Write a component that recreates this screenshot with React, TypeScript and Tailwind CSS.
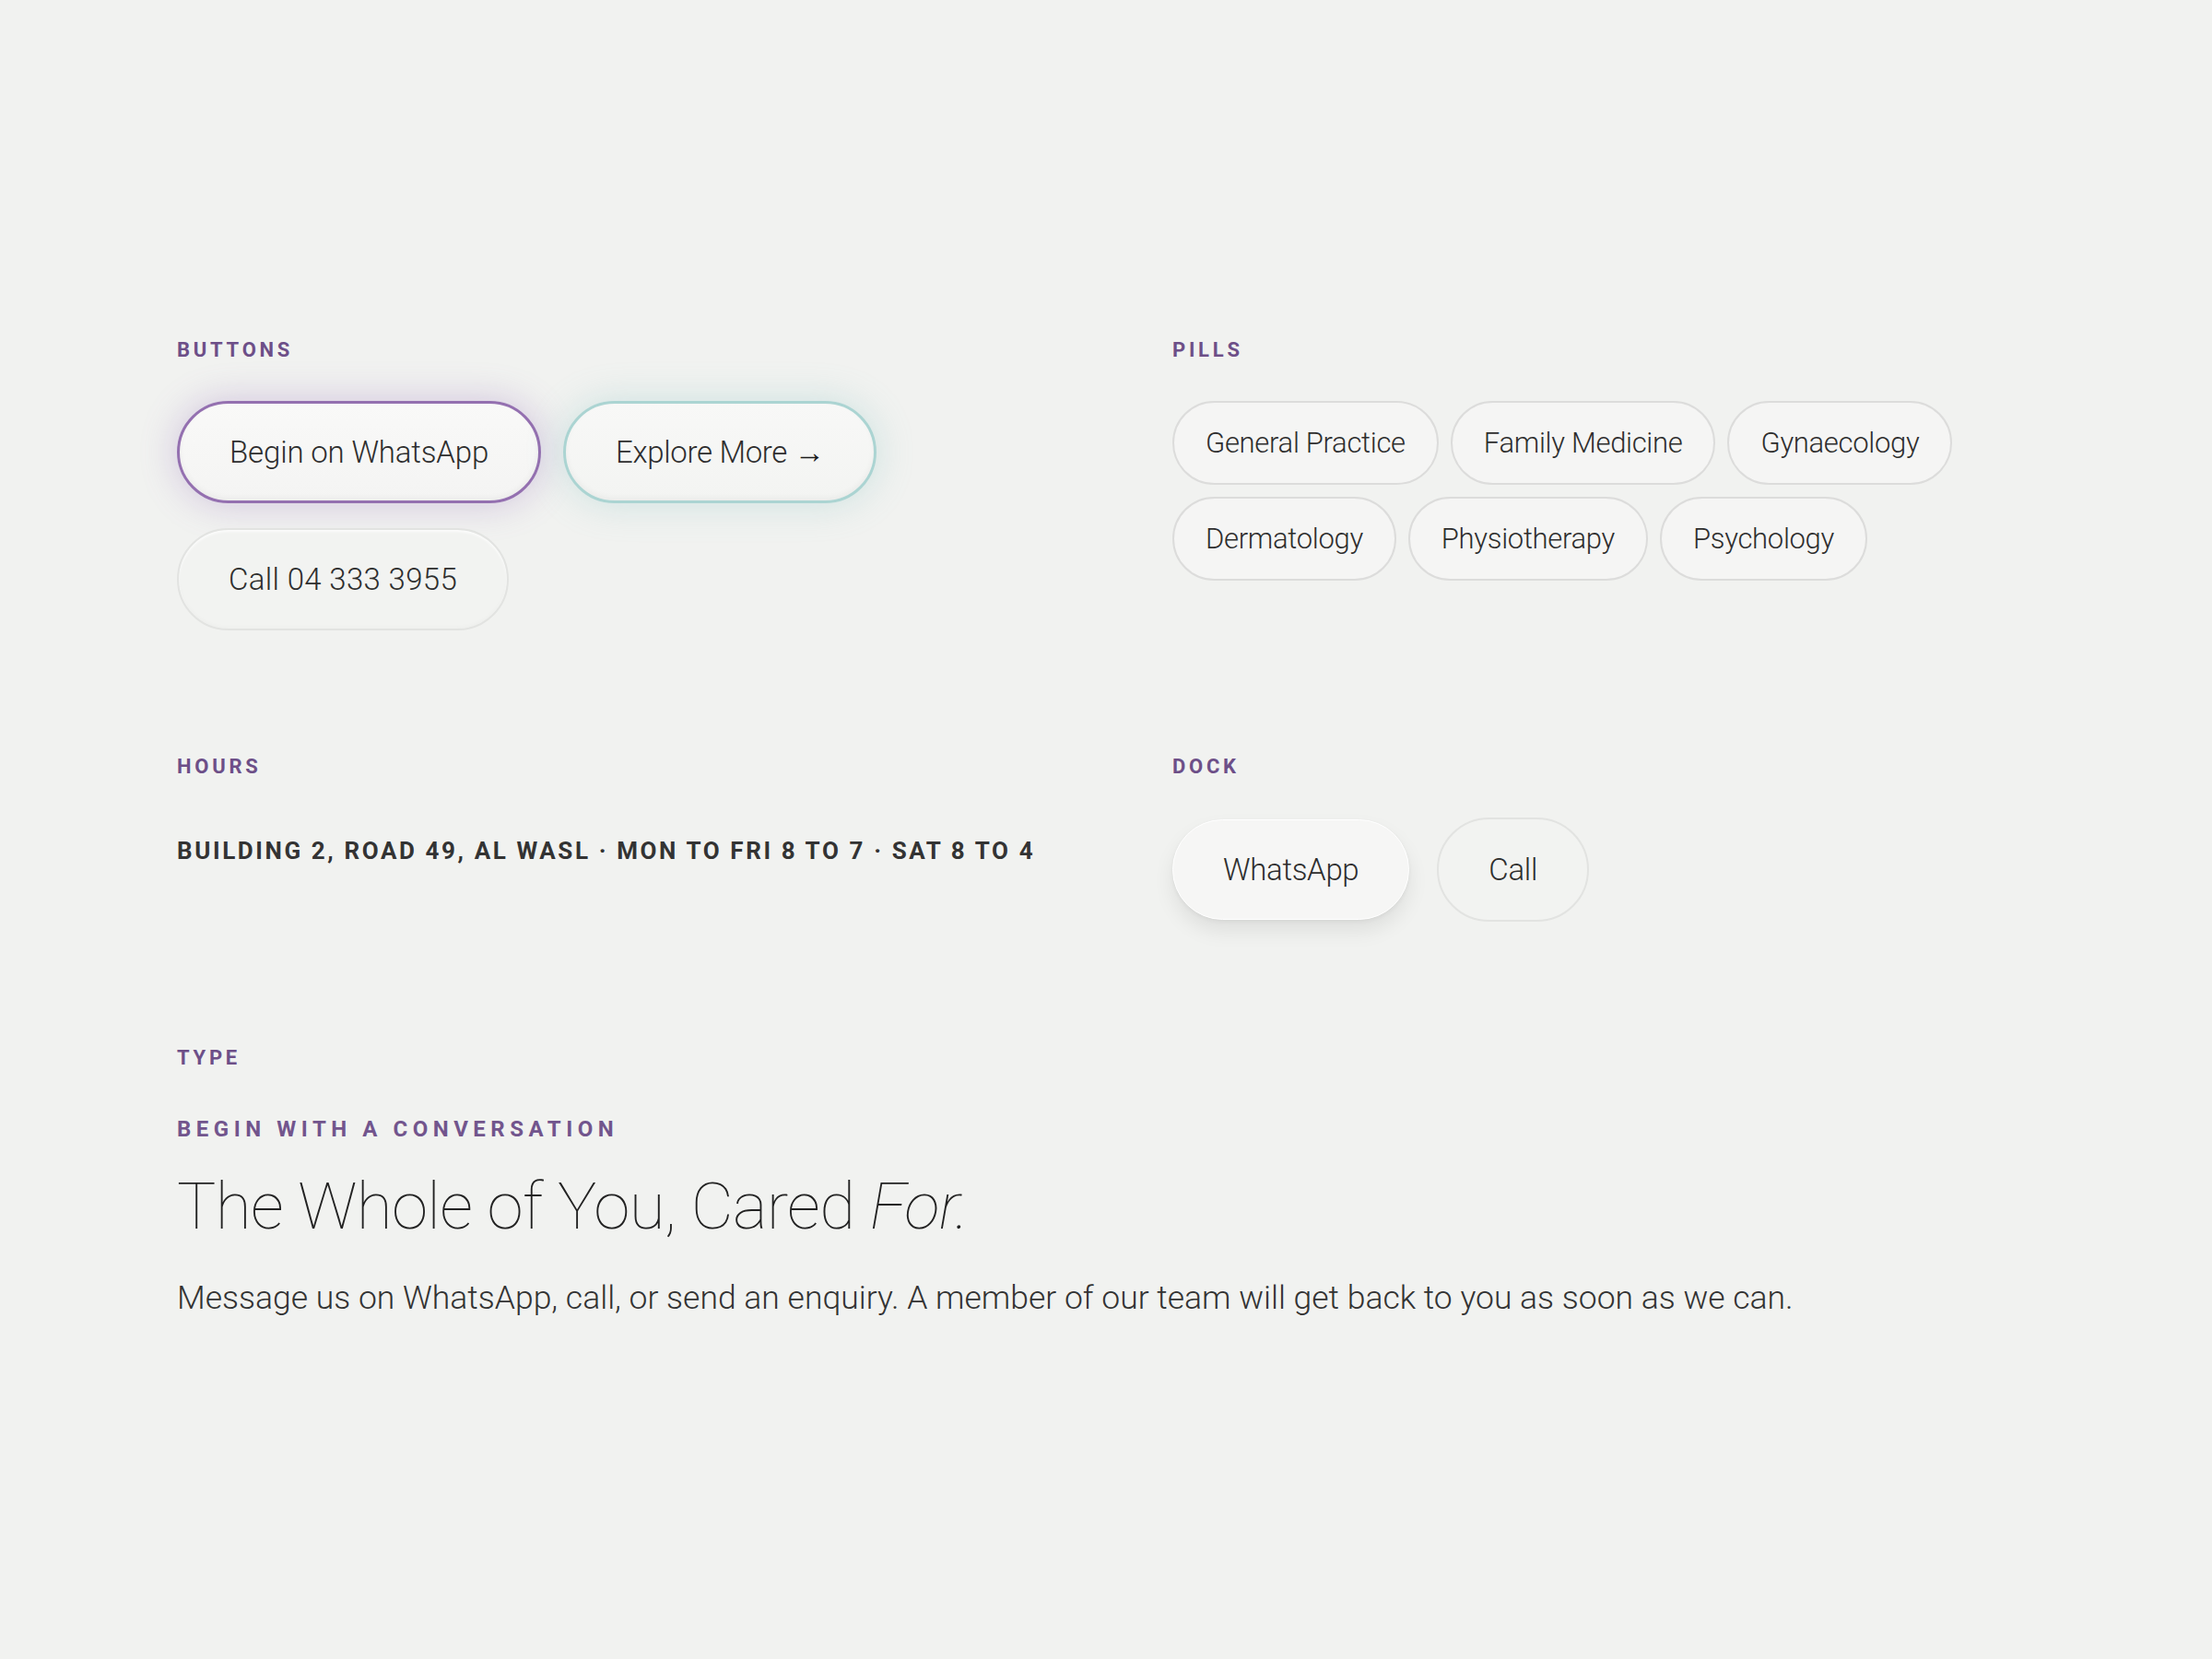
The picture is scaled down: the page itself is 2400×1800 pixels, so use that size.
const font = "font-['Roboto','Liberation_Sans',sans-serif]";

const Label = ({ children }: { children: string }) => (
  <div className="mb-[40px] text-[22px] font-bold leading-[30px] tracking-[0.17em] text-[#6d4f88]">
    {children}
  </div>
);

const btn =
  "rounded-full px-[54px] text-[33px] font-light leading-[45px] text-[#2e2e2e]";

const pills = [
  "General Practice",
  "Family Medicine",
  "Gynaecology",
  "Dermatology",
  "Physiotherapy",
  "Psychology",
];

export default function App() {
  return (
    <div
      className={`${font} flex min-h-screen items-center justify-center bg-[#f1f2f0] text-[#2d2d2d]`}
    >
      <div className="grid w-[2016px] grid-cols-2 gap-x-[144px] gap-y-[133px] pb-[5px]">
        {/* buttons */}
        <section>
          <Label>BUTTONS</Label>
          <div className="flex flex-wrap gap-x-[24px] gap-y-[27px]">
            <button
              className={`${btn} border-[3px] border-[#9470b0] bg-gradient-to-b from-[#f9f9f8] to-[#f4f4f3] py-[30px] tracking-[-0.005em] shadow-[0_0_40px_rgba(140,95,180,0.32),inset_0_-3px_6px_rgba(0,0,0,0.04)]`}
            >
              Begin on WhatsApp
            </button>
            <button
              className={`${btn} border-[3px] border-[#abd4d2] bg-gradient-to-b from-[#f8f8f7] to-[#f3f4f2] py-[30px] tracking-[-0.01em] shadow-[0_0_40px_rgba(120,190,188,0.3),inset_0_-3px_6px_rgba(0,0,0,0.04)]`}
            >
              Explore More <span className="font-bold text-[#1a1a1a]">→</span>
            </button>
            <button
              className={`${btn} border-2 border-[#e2e3e1] bg-[#f2f3f1] py-[31px] tracking-[0.01em] shadow-[inset_0_2px_3px_rgba(255,255,255,0.8),inset_0_-2px_4px_rgba(0,0,0,0.02)]`}
            >
              Call 04 333 3955
            </button>
          </div>
        </section>

        {/* pills */}
        <section>
          <Label>PILLS</Label>
          <div className="flex flex-wrap gap-[13px]">
            {pills.map((p) => (
              <span
                key={p}
                className="rounded-full border-2 border-[#dcdcdb] bg-[#f5f5f4] px-[34px] py-[22px] text-[31px] font-light leading-[43px] tracking-[-0.01em] text-[#2e2e2e]"
              >
                {p}
              </span>
            ))}
          </div>
        </section>

        {/* hours */}
        <section>
          <Label>HOURS</Label>
          <p className="pt-[19px] text-[26px] font-bold leading-[34px] tracking-[0.1em] text-[#333]">
            BUILDING 2, ROAD 49, AL WASL · MON TO FRI 8 TO 7 · SAT 8 TO 4
          </p>
        </section>

        {/* dock */}
        <section>
          <Label>DOCK</Label>
          <div className="flex items-center gap-[30px]">
            <button className="rounded-full border border-white bg-[#f6f6f5] px-[54px] py-[31px] text-[33px] font-light leading-[45px] tracking-[-0.01em] text-[#2e2e2e] shadow-[0_12px_22px_rgba(0,0,0,0.08),0_2px_4px_rgba(0,0,0,0.05)]">
              WhatsApp
            </button>
            <button className="rounded-full border-2 border-[#e2e3e1] bg-[#f2f3f1] px-[54px] py-[32px] text-[33px] font-light leading-[45px] tracking-[-0.01em] text-[#2e2e2e]">
              Call
            </button>
          </div>
        </section>

        {/* type */}
        <section className="col-span-2">
          <div className="mb-[45px] text-[22px] font-bold leading-[30px] tracking-[0.17em] text-[#6d4f88]">
            TYPE
          </div>
          <div className="text-[24px] font-bold leading-[34px] tracking-[0.23em] text-[#72558d]">
            BEGIN WITH A CONVERSATION
          </div>
          <h1 className="mt-[25px] text-[71px] font-thin leading-[84px] tracking-[-0.01em] text-[#222]">
            The Whole of You, Cared <em className="italic">For.</em>
          </h1>
          <p className="mt-[35px] text-[35.5px] font-light leading-[45px] text-[#333]">
            Message us on WhatsApp, call, or send an enquiry. A member of our team will get back to you as soon as we can.
          </p>
        </section>
      </div>
    </div>
  );
}
